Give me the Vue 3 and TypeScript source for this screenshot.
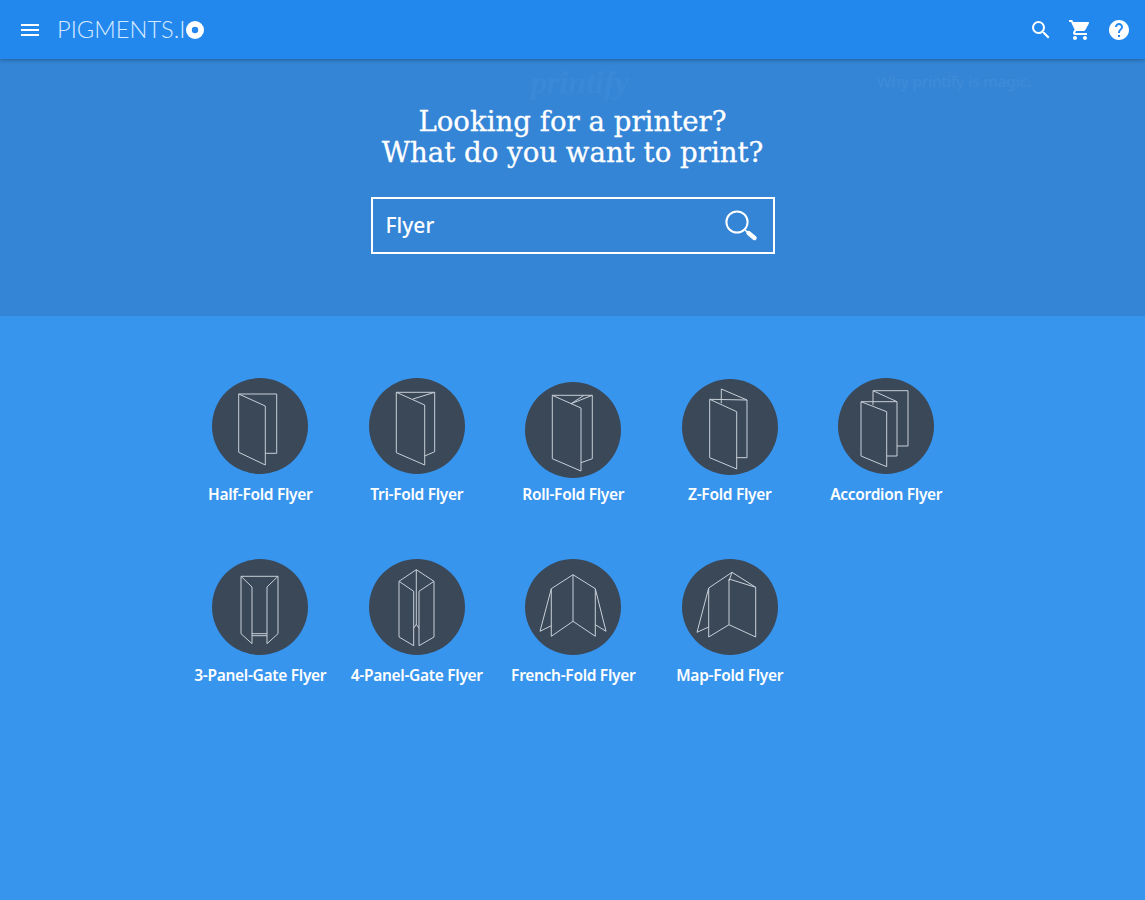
<template>
  <div class="page">
    <header class="topbar">
      <div class="brand">
        <svg class="icon menu" viewBox="0 0 24 24"><path d="M3 18h18v-2H3v2zm0-5h18v-2H3v2zm0-7v2h18V6H3z" /></svg>
        <span class="logo">PIGMENTS.I</span>
        <svg class="logo-dot" viewBox="0 0 18 18"><circle cx="9" cy="9" r="9" fill="#fff" /><circle cx="9" cy="9" r="3.2" fill="#2388ee" /></svg>
      </div>
      <div class="actions">
        <svg class="icon" viewBox="0 0 24 24"><path d="M15.5 14h-.79l-.28-.27A6.47 6.47 0 0 0 16 9.5 6.5 6.5 0 1 0 9.5 16c1.61 0 3.09-.59 4.23-1.57l.27.28v.79l5 4.99L20.49 19l-4.99-5zm-6 0C7.01 14 5 11.99 5 9.5S7.01 5 9.5 5 14 7.01 14 9.5 11.99 14 9.5 14z" /></svg>
        <svg class="icon" viewBox="0 0 24 24"><path d="M7 18c-1.1 0-1.99.9-1.99 2S5.9 22 7 22s2-.9 2-2-.9-2-2-2zM1 2v2h2l3.6 7.59-1.35 2.45c-.16.28-.25.61-.25.96 0 1.1.9 2 2 2h12v-2H7.42c-.14 0-.25-.11-.25-.25l.03-.12.9-1.63h7.45c.75 0 1.41-.41 1.75-1.03l3.58-6.49A1 1 0 0 0 20 4H5.21l-.94-2H1zm16 16c-1.1 0-1.99.9-1.99 2s.89 2 1.99 2 2-.9 2-2-.9-2-2-2z" /></svg>
        <svg class="icon" viewBox="0 0 24 24"><path d="M12 2C6.48 2 2 6.48 2 12s4.48 10 10 10 10-4.48 10-10S17.52 2 12 2zm1 17h-2v-2h2v2zm2.07-7.75l-.9.92C13.45 12.9 13 13.5 13 15h-2v-.5c0-1.1.45-2.1 1.17-2.83l1.24-1.26c.37-.36.59-.86.59-1.41 0-1.1-.9-2-2-2s-2 .9-2 2H8c0-2.21 1.79-4 4-4s4 1.79 4 4c0 .88-.36 1.68-.93 2.25z" /></svg>
      </div>
    </header>

    <section class="hero">
      <span class="ghost-logo">printify</span>
      <span class="ghost-link">Why printify is magic.</span>
      <h1>Looking for a printer?<br />What do you want to print?</h1>
      <div class="search">
        <span class="query">Flyer</span>
        <svg class="search-icon" viewBox="0 0 34 34">
          <circle cx="13" cy="13" r="10.6" fill="none" stroke="#fff" stroke-width="2" />
          <path d="M21 21l10 8.6" stroke="#fff" stroke-width="1.6" />
          <path d="M24.5 24l6 5" stroke="#fff" stroke-width="4.4" stroke-linecap="round" />
        </svg>
      </div>
    </section>

    <main class="catalog">
      <div v-for="item in flyers" :key="item.name" class="flyer">
        <svg class="badge" :class="item.shift" viewBox="0 0 96 96">
          <circle cx="48" cy="48" r="48" fill="#3a4858" />
          <polyline v-for="(line, i) in item.lines" :key="i" :points="line" class="fold" />
        </svg>
        <span class="name">{{ item.name }}</span>
      </div>
    </main>
  </div>
</template>

<script setup lang="ts">
interface Flyer {
  name: string;
  shift?: string;
  lines: string[];
}

const flyers: Flyer[] = [
  {
    name: 'Half-Fold Flyer',
    lines: [
      '26.7,16 64.7,16 64.7,75.3 53.3,75.3',
      '26.7,16 53.3,28 53.3,87 26.7,74.3 26.7,16',
    ],
  },
  {
    name: 'Tri-Fold Flyer',
    lines: [
      '27.3,14.3 55.7,27 55.7,87 27.3,74.7 27.3,14.3',
      '27.3,14.3 65.7,14.3 65.7,73.7 55.7,78',
      '65.7,14.3 44,21',
    ],
  },
  {
    name: 'Roll-Fold Flyer',
    shift: 'low',
    lines: [
      '27.3,13.3 56,26 56,89 27.3,76.7 27.3,13.3',
      '27.3,13.3 67.3,13.3 67.3,76.7 56,80.7',
      '67.3,13.3 46,21.7',
      '59,13.3 46,21.7',
    ],
  },
  {
    name: 'Z-Fold Flyer',
    shift: 'nudge',
    lines: [
      '27.7,20.3 54.7,32.7 54.7,90 27.7,78.7 27.7,20.3',
      '39.3,24.3 39.3,10 65,21 65,78.7 54.7,78.7',
      '27.7,20.3 65,21',
    ],
  },
  {
    name: 'Accordion Flyer',
    lines: [
      '23,23.7 48.7,33.7 48.7,88.7 23,78 23,23.7',
      '35,27 35,12.7 59,23.7 59,78 48.7,78',
      '23,23.7 59,23.7',
      '35,12.7 70,12.7 70,68 59,68',
    ],
  },
  {
    name: '3-Panel-Gate Flyer',
    lines: [
      '29,17.3 40,28 40,84.7 29,74.7 29,17.3',
      '66,17.3 55,28 55,84.7 66,74.7 66,17.3',
      '29,17.3 66,17.3',
      '40,74.7 55,74.7',
      '40,76.7 55,76.7',
    ],
  },
  {
    name: '4-Panel-Gate Flyer',
    lines: [
      '30,22.3 47.3,10.7 65,22.3',
      '30,22.3 44.7,32.3 44.7,86.7 30,78 30,22.3',
      '65,22.3 50,32.3 50,86.7 65,78 65,22.3',
      '47.3,10.7 47.3,66',
      '44.7,69 47.3,65.5 50,69',
    ],
  },
  {
    name: 'French-Fold Flyer',
    lines: [
      '48,15.7 26.3,29.7 26.3,77.3 48,62.3 70.3,77.3 70.3,29.7 48,15.7 48,62.3',
      '26.3,29.7 15,72.3 26.3,66.7',
      '70.3,29.7 81,72.3 70.3,65.7',
    ],
  },
  {
    name: 'Map-Fold Flyer',
    lines: [
      '47,22 50,13.3 26.7,29 26.7,78 47,65.7',
      '26.7,29 15,73.3 26.7,68',
      '47,65.7 47,20 73.7,28.3 73.7,78 47,65.7',
      '50,13.3 73.7,28.3',
    ],
  },
];
</script>

<style>
html,
body {
  margin: 0;
  background: #3895ee;
}
</style>

<style scoped>
.page {
  min-height: 900px;
  display: flex;
  flex-direction: column;
  overflow: hidden;
  background: #3895ee;
  font-family: 'Noto Sans', 'Open Sans', sans-serif;
  color: #fff;
}

.topbar {
  position: relative;
  z-index: 2;
  height: 59px;
  display: flex;
  align-items: center;
  justify-content: space-between;
  padding: 0 14px 0 18px;
  background: #2388ee;
  box-shadow: 0 1px 4px rgba(0, 0, 0, 0.3);
}

.brand,
.actions {
  display: flex;
  align-items: center;
}

.actions {
  gap: 15px;
}

.icon {
  width: 24px;
  height: 24px;
  fill: #fff;
}

.logo {
  margin: -2px 0 0 15px;
  font-family: Lato, sans-serif;
  font-weight: 300;
  font-size: 23.7px;
  color: #d6ebff;
}

.logo-dot {
  width: 18px;
  height: 18px;
  margin-left: 1px;
}

.hero {
  position: relative;
  height: 257px;
  display: flex;
  flex-direction: column;
  align-items: center;
  background: #3485d6;
}

.ghost-logo {
  position: absolute;
  left: 531px;
  top: 5px;
  font-family: 'Liberation Serif', serif;
  font-style: italic;
  font-weight: 700;
  font-size: 32px;
  color: #3a89d8;
  filter: blur(0.6px);
}

.ghost-link {
  position: absolute;
  left: 877px;
  top: 12px;
  font-size: 15.3px;
  color: #3f8cd9;
}

h1 {
  margin: 47px 0 0;
  font-family: 'DejaVu Serif', serif;
  font-weight: 400;
  font-size: 27.6px;
  line-height: 31px;
  text-align: center;
  color: #fff;
  -webkit-text-stroke: 0.3px #fff;
}

.search {
  height: 53px;
  margin-top: 29px;
  display: flex;
  align-items: center;
  justify-content: space-between;
  padding: 0 15px 0 13px;
  box-sizing: content-box;
  width: 372px;
  border: 2px solid #fff;
}

.query {
  margin-top: -2px;
  font-size: 21px;
  font-weight: 500;
}

.search-icon {
  width: 34px;
  height: 34px;
}

.catalog {
  width: 783px;
  margin: 62px auto 0;
  padding-left: 2px;
  display: grid;
  grid-template-columns: repeat(5, 156.5px);
  row-gap: 54px;
}

.flyer {
  display: flex;
  flex-direction: column;
  align-items: center;
}

.badge {
  width: 96px;
  height: 96px;
}

.badge.low {
  transform: translateY(4px);
}

.badge.nudge {
  transform: translateY(1px);
}

.fold {
  fill: none;
  stroke: #c8d0d8;
  stroke-width: 1;
}

.name {
  margin-top: 9px;
  font-size: 15.5px;
  line-height: 22px;
  font-weight: 600;
  white-space: nowrap;
  letter-spacing: -0.3px;
}
</style>
